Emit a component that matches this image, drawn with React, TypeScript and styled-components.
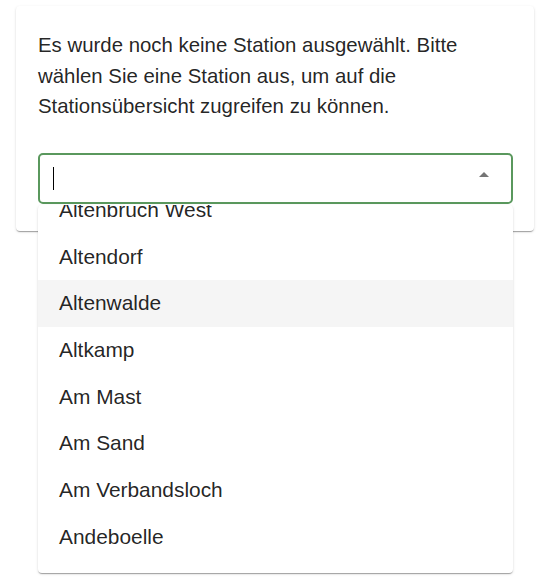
import React, { useEffect, useRef } from 'react';
import styled, { createGlobalStyle } from 'styled-components';

const stations = [
  'Achim',
  'Adelheide',
  'Altenbruch',
  'Altenbruch West',
  'Altendorf',
  'Altenwalde',
  'Altkamp',
  'Am Mast',
  'Am Sand',
  'Am Verbandsloch',
  'Andeboelle',
  'Apensen',
  'Appeln',
];

const ROW_HEIGHT = 46.67;

const GlobalStyle = createGlobalStyle`
  body {
    margin: 0;
    background: #ffffff;
    font-family: "Liberation Sans", Arial, sans-serif;
    color: rgba(0, 0, 0, 0.87);
  }
`;

const Page = styled.div`
  width: 543px;
  height: 578px;
  padding: 6px 9px 0 16px;
  box-sizing: border-box;
  overflow: hidden;
`;

const Card = styled.div`
  background: #fff;
  border-radius: 4px;
  box-shadow: 0 2px 1px -1px rgba(0, 0, 0, 0.2), 0 1px 1px 0 rgba(0, 0, 0, 0.14),
    0 1px 3px 0 rgba(0, 0, 0, 0.12);
  padding: 24px 21px 27px 22px;
`;

const Message = styled.p`
  margin: 0 0 31px;
  font-size: 20.4px;
  line-height: 30.6px;
`;

const Field = styled.div`
  position: relative;
`;

const InputBox = styled.div`
  height: 51px;
  box-sizing: border-box;
  border: 2px solid #5a985d;
  border-radius: 5px;
  display: flex;
  align-items: center;
  padding: 0 15px 0 13px;
`;

const Caret = styled.span`
  width: 1px;
  height: 23px;
  background: #000;
`;

const Spacer = styled.div`
  flex: 1;
`;

const ArrowIcon = styled.svg`
  width: 24px;
  height: 24px;
  fill: #757575;
  margin-top: -6px;
`;

const Popup = styled.div`
  position: absolute;
  top: 52px;
  left: 0;
  right: 0;
  height: 368px;
  background: #fff;
  border-radius: 4px;
  box-shadow: 0 2px 1px -1px rgba(0, 0, 0, 0.2), 0 1px 1px 0 rgba(0, 0, 0, 0.14),
    0 1px 3px 0 rgba(0, 0, 0, 0.12);
  overflow: hidden;
`;

const List = styled.ul`
  margin: 0;
  padding: 8px 0;
  list-style: none;
  height: 100%;
  box-sizing: border-box;
  overflow-y: auto;
  scrollbar-width: none;
  &::-webkit-scrollbar {
    display: none;
  }
`;

const Option = styled.li<{ $active?: boolean }>`
  height: ${ROW_HEIGHT}px;
  display: flex;
  align-items: center;
  padding: 0 21px;
  font-size: 20.9px;
  background: ${(p) => (p.$active ? '#f5f5f5' : 'transparent')};
`;

function App() {
  const listRef = useRef<HTMLUListElement>(null);

  // list is opened scrolled down to "Altenbruch West"
  useEffect(() => {
    if (listRef.current) listRef.current.scrollTop = 26.4 + 3 * ROW_HEIGHT;
  }, []);

  return (
    <>
      <GlobalStyle />
      <Page>
        <Card>
          <Message>
            Es wurde noch keine Station ausgewählt. Bitte wählen Sie eine Station aus, um auf die
            Stationsübersicht zugreifen zu können.
          </Message>
          <Field>
            <InputBox>
              <Caret />
              <Spacer />
              <ArrowIcon viewBox="0 0 24 24">
                <path d="M7 14l5-5 5 5z" />
              </ArrowIcon>
            </InputBox>
            <Popup>
              <List ref={listRef}>
                {stations.map((s) => (
                  <Option key={s} $active={s === 'Altenwalde'}>
                    {s}
                  </Option>
                ))}
              </List>
            </Popup>
          </Field>
        </Card>
      </Page>
    </>
  );
}

export default App;
